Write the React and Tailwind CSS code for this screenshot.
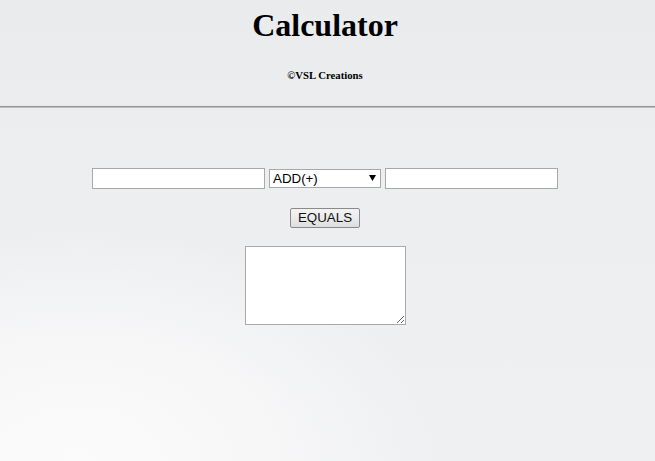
import { useState } from 'react';

const OPS = [
  { key: 'add', label: 'ADD(+)' },
  { key: 'sub', label: 'SUBTRACT(-)' },
  { key: 'mul', label: 'MULTIPLY(*)' },
  { key: 'div', label: 'DIVIDE(/)' },
];

export default function App() {
  const [a, setA] = useState('');
  const [b, setB] = useState('');
  const [op, setOp] = useState('add');
  const [result, setResult] = useState('');

  function handleEquals() {
    const x = parseFloat(a);
    const y = parseFloat(b);
    if (isNaN(x) || isNaN(y)) {
      setResult('');
      return;
    }
    const r = op === 'add' ? x + y : op === 'sub' ? x - y : op === 'mul' ? x * y : x / y;
    setResult(String(r));
  }

  return (
    <div className="min-h-[461px] w-full overflow-hidden bg-[radial-gradient(ellipse_360px_230px_at_12%_100%,#fbfbfc_0%,#f7f7f8_50%,rgba(238,239,241,0)_100%),linear-gradient(180deg,#eaebed_0%,#eceef0_40%,#eff0f2_100%)] font-['Liberation_Serif',serif] text-black">
      {/* Header */}
      <div className="w-[650px] flex flex-col items-center">
        <h1 className="pt-[7px] text-[32px] leading-[37px] font-bold">Calculator</h1>
        <h6 className="mt-[25px] text-[10.72px] leading-[12px] font-bold">©VSL Creations</h6>
      </div>

      <div className="mt-[25px] h-[2px] w-full border-t border-[#959595] bg-[#bdbdbd]" />

      {/* Calculator form */}
      <div className="w-[650px] flex flex-col items-center font-['Liberation_Sans',Arial,sans-serif] text-[13.33px]">
        <div className="mt-[60px] flex items-center gap-[4px]">
          <input
            value={a}
            onChange={e => setA(e.target.value)}
            className="w-[173px] h-[21px] px-[2px] bg-white border border-[#a9a9a9] outline-none"
          />
          <div className="relative">
            <select
              value={op}
              onChange={e => setOp(e.target.value)}
              className="appearance-none w-[112px] h-[19px] pl-[3px] pr-[14px] bg-white border border-[#a9a9a9] leading-[17px] outline-none"
            >
              {OPS.map(o => (
                <option key={o.key} value={o.key}>{o.label}</option>
              ))}
            </select>
            <svg className="pointer-events-none absolute right-[5px] top-[6px]" width="7" height="6" viewBox="0 0 7 6">
              <path d="M0 0H7L3.5 6Z" fill="#000" />
            </svg>
          </div>
          <input
            value={b}
            onChange={e => setB(e.target.value)}
            className="w-[173px] h-[21px] px-[2px] bg-white border border-[#a9a9a9] outline-none"
          />
        </div>

        <button
          onClick={handleEquals}
          className="mt-[19px] w-[70px] h-[20px] rounded-[2px] border border-[#8a8a8a] bg-[linear-gradient(180deg,#f3f3f3_0%,#ebebeb_50%,#dddddd_100%)] text-[#111] leading-[18px]"
        >
          EQUALS
        </button>

        <textarea
          value={result}
          readOnly
          className="mt-[18px] w-[161px] h-[79px] bg-white border border-[#a9a9a9] outline-none resize"
        />
      </div>
    </div>
  );
}
